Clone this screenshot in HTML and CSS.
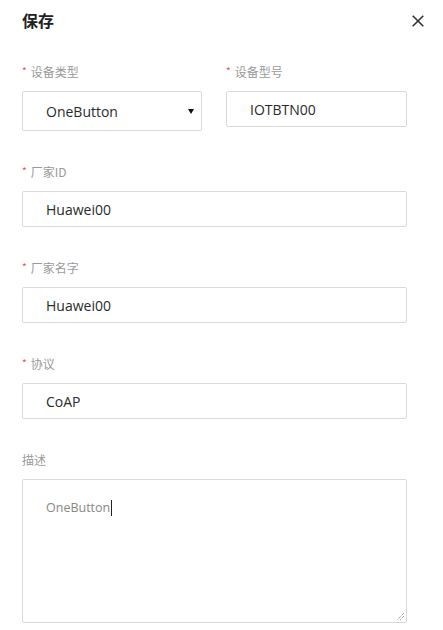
FILE: index.html
```html
<!DOCTYPE html>
<html>
<head>
<meta charset="utf-8">
<link rel="stylesheet" href="styles.css">
</head>
<body>
<div class="dialog">
  <div class="header">
    <div class="title">保存</div>
    <svg class="close" width="12" height="12" viewBox="0 0 12 12"><path d="M0.7 0.7 L11.3 11.3 M11.3 0.7 L0.7 11.3" stroke="#333" stroke-width="1.6" fill="none"/></svg>
  </div>
  <div class="row">
    <div class="field">
      <div class="label"><span class="req">*</span>设备类型</div>
      <div class="control select"><span class="value">OneButton</span><span class="arrow"></span></div>
    </div>
    <div class="field">
      <div class="label"><span class="req">*</span>设备型号</div>
      <div class="control input"><span class="value">IOTBTN00</span></div>
    </div>
  </div>
  <div class="field">
    <div class="label"><span class="req">*</span>厂家ID</div>
    <div class="control input"><span class="value">Huawei00</span></div>
  </div>
  <div class="field">
    <div class="label"><span class="req">*</span>厂家名字</div>
    <div class="control input"><span class="value">Huawei00</span></div>
  </div>
  <div class="field">
    <div class="label"><span class="req">*</span>协议</div>
    <div class="control input"><span class="value">CoAP</span></div>
  </div>
  <div class="field">
    <div class="label">描述</div>
    <div class="control textarea"><span class="tvalue">OneButton</span><span class="caret"></span>
      <svg class="grip" width="10" height="10" viewBox="0 0 10 10"><path d="M9 2 L2 9 M9 5 L5 9" stroke="#777" stroke-width="1" stroke-dasharray="1 1" fill="none"/></svg>
    </div>
  </div>
</div>
</body>
</html>
```
FILE: styles.css
```css
html, body {
  margin: 0;
  padding: 0;
  background: #fff;
}
body {
  font-family: "Noto Sans CJK SC", "Liberation Sans", sans-serif;
  color: #333;
}
.dialog {
  padding: 0 36px 0 22px;
}
.header {
  display: flex;
  justify-content: space-between;
  align-items: center;
  height: 40px;
  padding-bottom: 22px;
}
.title {
  font-size: 16px;
  font-weight: 700;
  color: #222;
  line-height: 20px;
}
.close {
  margin-right: -17px;
  margin-top: 1px;
}
.row {
  display: grid;
  grid-template-columns: 180px 1fr;
  column-gap: 24px;
  align-items: start;
  margin-bottom: 31px;
}
.row .field {
  margin-bottom: 0;
}
.field {
  margin-bottom: 31px;
}
.label {
  font-size: 12px;
  line-height: 20px;
  height: 20px;
  color: #999;
  margin-bottom: 9px;
  display: flex;
  align-items: center;
}
.req {
  color: #f04848;
  font-size: 10px;
  margin-right: 4px;
  position: relative;
  top: -1px;
}
.control {
  box-sizing: border-box;
  border: 1px solid #d9d9d9;
  border-radius: 2px;
  background: #fff;
  display: flex;
  align-items: center;
  padding-left: 23px;
  font-family: "Open Sans", "Noto Sans CJK SC", sans-serif;
  font-size: 14px;
  color: #2a2a2a;
}
.input {
  height: 36px;
}
.select {
  height: 40px;
  justify-content: space-between;
  padding-right: 7px;
}
.arrow {
  width: 0;
  height: 0;
  border-left: 3px solid transparent;
  border-right: 3px solid transparent;
  border-top: 5px solid #111;
}
.textarea {
  position: relative;
  height: 144px;
  align-items: flex-start;
  padding-top: 20px;
  font-size: 12.5px;
  color: #888;
}
.tvalue {
  line-height: 16px;
}
.caret {
  display: inline-block;
  width: 1px;
  height: 16px;
  background: #222;
  margin-left: 1px;
}
.grip {
  position: absolute;
  right: 1px;
  bottom: 1px;
}
```
